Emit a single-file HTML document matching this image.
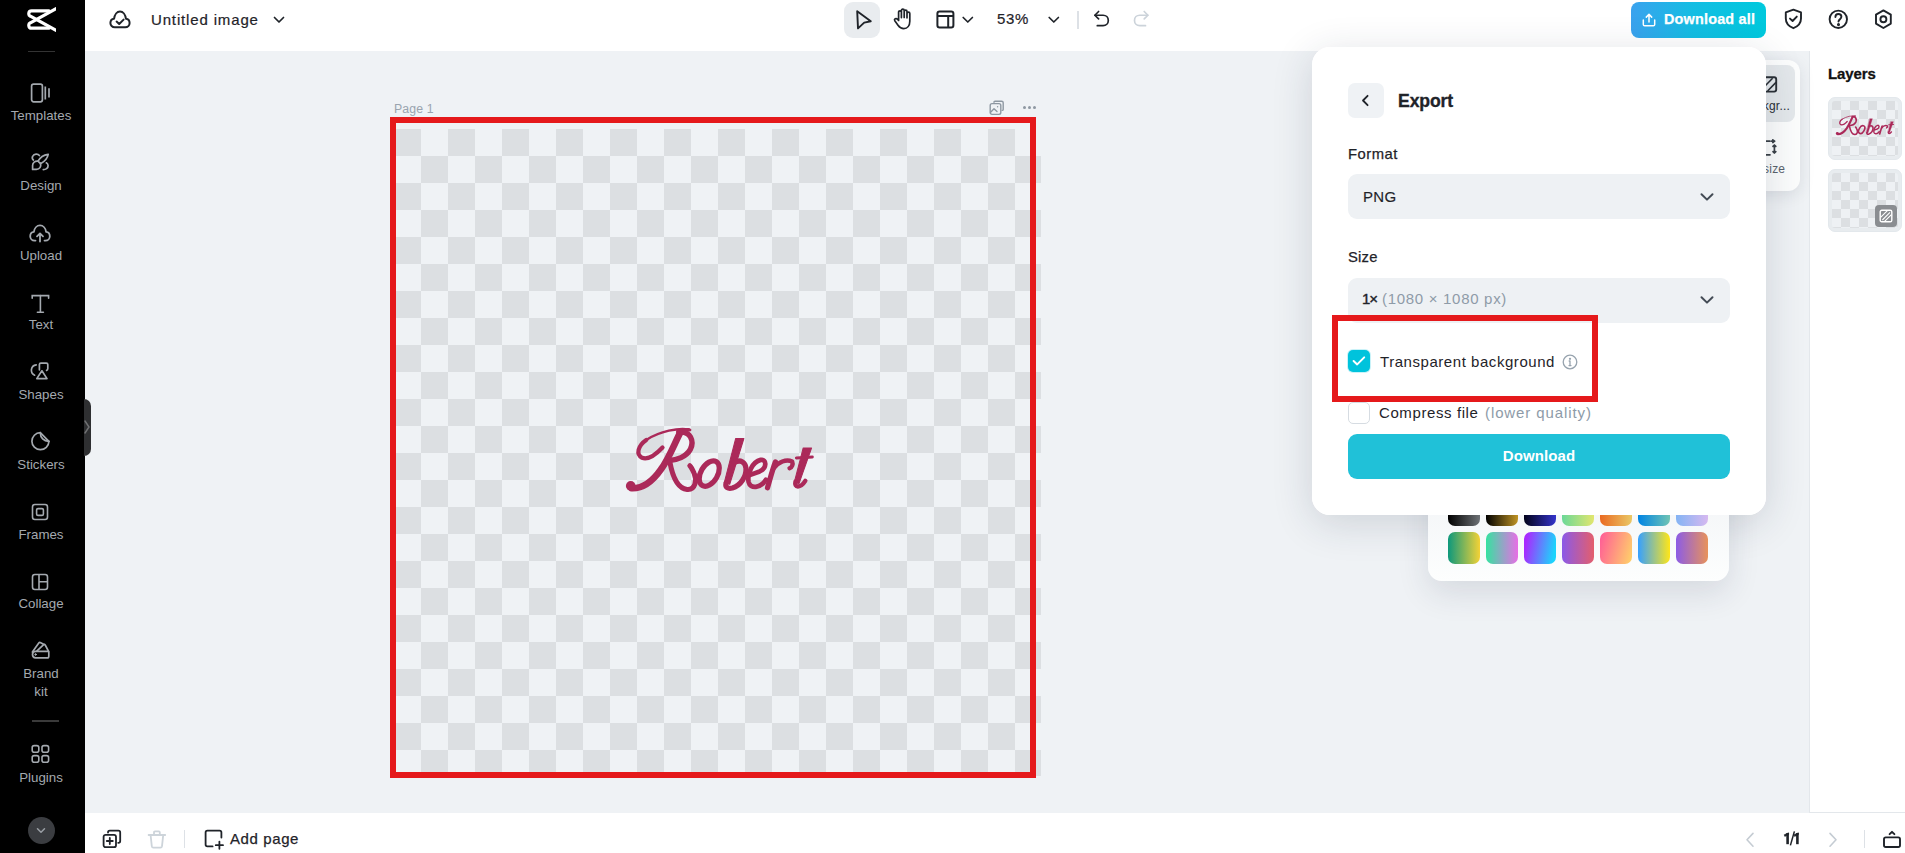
<!DOCTYPE html>
<html><head><meta charset="utf-8">
<style>
*{box-sizing:border-box;margin:0;padding:0}
html,body{width:1905px;height:853px;overflow:hidden;background:#eff2f5;font-family:"Liberation Sans",sans-serif;color:#1f2329}
.abs{position:absolute}
svg{display:block;position:absolute;overflow:visible}
#side{left:0;top:0;width:85px;height:853px;background:#000}
#header{left:85px;top:0;width:1820px;height:51px;background:#fff}
#bottom{left:85px;top:813px;width:1820px;height:40px;background:#fff}
#layers{left:1809px;top:51px;width:96px;height:762px;background:#fff;border-left:1px solid #e3e7eb;border-bottom:1px solid #e3e7eb}
.sl{position:absolute;left:0;width:82px;text-align:center;font-size:13.3px;color:#a4a9af;line-height:13px;white-space:nowrap}
.t{position:absolute;white-space:nowrap;line-height:1}
</style></head><body>
<!-- SIDEBAR -->
<div id="side" class="abs">
  <svg style="left:26px;top:7px;overflow:hidden" width="30" height="25" viewBox="-1 -1 30 25" fill="none" stroke="#fff" stroke-width="3.2" stroke-linejoin="round" stroke-linecap="round">
    <path d="M22 2.8H4.6Q1.8 2.8 1.8 5.6V6.2Q1.8 7.4 3.4 8.2L29.5 22.6"/>
    <path d="M22 20.2H4.6Q1.8 20.2 1.8 17.4V16.8Q1.8 15.6 3.4 14.8L29.5 0.4"/>
  </svg>
  <div class="abs" style="left:28px;top:51px;width:27px;height:1px;background:#333"></div>
  <!-- Templates -->
  <svg style="left:30px;top:83px" width="22" height="20" viewBox="0 0 22 20" fill="none" stroke="#a4a9af" stroke-width="1.7">
    <rect x="1.6" y="1.2" width="10.8" height="17.6" rx="2"/>
    <path d="M15.3 3.4V16.4M19 5.2V14.6"/>
  </svg>
  <div class="sl" style="top:109px">Templates</div>
  <!-- Design -->
  <svg style="left:31px;top:153px" width="19" height="19" viewBox="0 0 19 19" fill="none" stroke="#a4a9af" stroke-width="1.7" stroke-linecap="round" stroke-linejoin="round">
    <path d="M17.2 1.3C12 2 8.6 5.2 7 8.2L9.5 10.7C12.5 9.1 16.4 5.6 17.2 1.3Z"/>
    <path d="M7 8.2C4 7.8 1.6 9.6 1.6 12.6V16.4H5.4C8.6 16.4 10.4 13.6 9.5 10.7"/>
    <path d="M8.4 2.6C7 0.7 3.2 0.5 1.6 3.4C1 4.8 1.5 6.3 2.4 7"/>
    <path d="M15.3 9.8C17.5 11 17.8 14 15.6 15.6C14.6 16.3 13.4 16.6 12.3 16.6"/>
  </svg>
  <div class="sl" style="top:179px">Design</div>
  <!-- Upload -->
  <svg style="left:29.4px;top:223.6px" width="22" height="19" viewBox="0 0 22 19" fill="none" stroke="#a4a9af" stroke-width="1.8" stroke-linecap="round" stroke-linejoin="round">
    <path d="M6.5 16.6H5.6C3.1 16.6 1.2 14.6 1.2 12.2C1.2 10 2.8 8.2 4.9 7.9C5.3 4.2 7.9 1.4 11 1.4S16.7 4.2 17.1 7.9C19.2 8.2 20.8 10 20.8 12.2C20.8 14.6 18.9 16.6 16.4 16.6H15.5"/>
    <path d="M11 17.6V9.6M8 12.4L11 9.4L14 12.4"/>
  </svg>
  <div class="sl" style="top:249px">Upload</div>
  <!-- Text -->
  <svg style="left:30px;top:294px" width="21" height="20" viewBox="0 0 21 20" fill="none" stroke="#a4a9af" stroke-width="1.6" stroke-linecap="round">
    <path d="M2.2 4.2V1.6H18.6V4.2"/>
    <path d="M10.4 1.6V18.2M7.4 18.2H13.4"/>
  </svg>
  <div class="sl" style="top:318px">Text</div>
  <!-- Shapes -->
  <svg style="left:30px;top:361px" width="20" height="20" viewBox="0 0 20 20" fill="none" stroke="#a4a9af" stroke-width="1.7" stroke-linecap="round" stroke-linejoin="round">
    <path d="M6.2 3.9A5.4 5.4 0 0 0 4.6 14.2"/>
    <path d="M9.4 8.8V3.6Q9.4 2.1 10.9 2.1H16.3Q17.8 2.1 17.8 3.6V7.6Q17.8 9 16.6 9.4"/>
    <path d="M11.9 9.8L17 17.6H6.8Z"/>
  </svg>
  <div class="sl" style="top:388px">Shapes</div>
  <!-- Stickers -->
  <svg style="left:30px;top:431px" width="21" height="21" viewBox="0 0 21 21" fill="none" stroke="#a4a9af" stroke-width="1.7" stroke-linecap="round" stroke-linejoin="round">
    <path d="M10.3 1.7A8.5 8.5 0 1 0 18.9 10.4"/>
    <path d="M10.3 1.7L18.9 10.4"/>
    <path d="M10.3 2C10.4 6.6 13.8 10.4 18.7 10.3"/>
  </svg>
  <div class="sl" style="top:458px">Stickers</div>
  <!-- Frames -->
  <svg style="left:31px;top:503px" width="18" height="18" viewBox="0 0 18 18" fill="none" stroke="#a4a9af" stroke-width="1.6">
    <rect x="1.5" y="1.5" width="15" height="15" rx="2.4"/>
    <rect x="5.6" y="5.6" width="6.8" height="6.8" rx="1.4"/>
  </svg>
  <div class="sl" style="top:528px">Frames</div>
  <!-- Collage -->
  <svg style="left:31px;top:573px" width="18" height="18" viewBox="0 0 18 18" fill="none" stroke="#a4a9af" stroke-width="1.6">
    <rect x="1.5" y="1.5" width="15" height="15" rx="2.4"/>
    <path d="M8 1.5V16.5M8 8.8H16.5"/>
  </svg>
  <div class="sl" style="top:597px">Collage</div>
  <!-- Brand kit -->
  <svg style="left:30px;top:640px" width="21" height="20" viewBox="0 0 21 20" fill="none" stroke="#a4a9af" stroke-width="1.7" stroke-linecap="round" stroke-linejoin="round">
    <path d="M2.4 12L8.6 3.2Q9.5 2 10.7 2.7L14 4.6"/>
    <path d="M7 10.8L13.4 4.8Q14.4 4 15.2 5L18.2 10.6"/>
    <path d="M18.8 11.4V16.2Q18.8 17.9 17.1 17.9H5.6Q2.5 17.9 2.5 14.6Q2.5 11.3 5.6 11.3Z"/>
    <circle cx="5.6" cy="14.5" r="0.8" fill="#a4a9af" stroke-width="1"/>
  </svg>
  <div class="sl" style="top:667px">Brand</div>
  <div class="sl" style="top:685px">kit</div>
  <div class="abs" style="left:32px;top:720px;width:27px;height:1.5px;background:#3a3a3a"></div>
  <!-- Plugins -->
  <svg style="left:31px;top:744px" width="19" height="20" viewBox="0 0 19 20" fill="none" stroke="#a4a9af" stroke-width="1.6">
    <rect x="1.2" y="1.6" width="6.6" height="6.6" rx="2"/>
    <rect x="11" y="1.6" width="6.6" height="6.6" rx="2"/>
    <rect x="1.2" y="11.6" width="6.6" height="6.6" rx="2"/>
    <rect x="11" y="11.6" width="6.6" height="6.6" rx="2"/>
  </svg>
  <div class="sl" style="top:771px">Plugins</div>
  <div class="abs" style="left:27.5px;top:817px;width:27px;height:27px;border-radius:50%;background:#3b3d41"></div>
  <svg style="left:36px;top:827px" width="10" height="7" viewBox="0 0 10 7" fill="none" stroke="#9a9fa5" stroke-width="1.5" stroke-linecap="round" stroke-linejoin="round"><path d="M1.5 1.8L5 5.2L8.5 1.8"/></svg>
</div>
<div class="abs" style="left:84px;top:399px;width:7px;height:57px;background:#2e2f31;border-radius:0 7px 7px 0"></div>
<svg style="left:84px;top:419px" width="7" height="16" viewBox="0 0 7 16" fill="none" stroke="#6f7072" stroke-width="1.5" stroke-linecap="round"><path d="M1 2L5 8L1 14"/></svg>
<!-- HEADER -->
<div id="header" class="abs"></div>
<!-- header left -->
<svg style="left:109px;top:10px" width="22" height="19" viewBox="0 0 22 19" fill="none" stroke="#1f2329" stroke-width="2" stroke-linecap="round" stroke-linejoin="round">
  <path d="M5.8 17.2C3.2 17.2 1.4 15.3 1.4 12.9C1.4 10.7 3 9 5.1 8.7C5.6 4.6 8 1.4 11 1.4S16.4 4.6 16.9 8.7C19 9 20.6 10.7 20.6 12.9C20.6 15.3 18.8 17.2 16.2 17.2Z"/>
  <path d="M7.6 11.6L10.2 14L14.6 9.6"/>
</svg>
<div class="t" style="left:151px;top:12px;font-size:15px;letter-spacing:0.85px;font-weight:500;color:#1f2329;-webkit-text-stroke:0.2px #1f2329">Untitled image</div>
<svg style="left:273px;top:16px" width="12" height="8" viewBox="0 0 12 8" fill="none" stroke="#1f2329" stroke-width="1.7" stroke-linecap="round" stroke-linejoin="round"><path d="M1.5 1.5L6 6L10.5 1.5"/></svg>
<!-- center toolbar -->
<div class="abs" style="left:844px;top:2px;width:36px;height:36px;border-radius:9px;background:#e9ecef"></div>
<svg style="left:855px;top:9px" width="18" height="21" viewBox="0 0 18 21" fill="none" stroke="#1f2329" stroke-width="1.9" stroke-linejoin="round">
  <path d="M2.2 2.2L15.8 12.2L9.2 13.6L3 19.4Z"/>
</svg>
<svg style="left:893px;top:8px" width="19" height="22" viewBox="0 0 19 22" fill="none" stroke="#1f2329" stroke-width="1.7" stroke-linecap="round" stroke-linejoin="round">
  <path d="M5.6 12.4V4.2Q5.6 2.8 7 2.8Q8.4 2.8 8.4 4.2V9.6M8.4 9V2.6Q8.4 1.2 9.8 1.2Q11.2 1.2 11.2 2.6V9.4M11.2 9.4V3.6Q11.2 2.2 12.6 2.2Q14 2.2 14 3.6V9.8M14 9.8V5.6Q14 4.2 15.4 4.2Q16.8 4.2 16.8 5.6V13.2C16.8 17.6 14.4 20.6 10.8 20.6C8.2 20.6 6.6 19.4 5 17.2L1.8 12.8Q1 11.6 2.2 10.8Q3.4 10.2 4.4 11.2L5.6 12.4"/>
</svg>
<svg style="left:936px;top:10px" width="19" height="19" viewBox="0 0 19 19" fill="none" stroke="#1f2329" stroke-width="2">
  <rect x="1.4" y="1.4" width="16" height="16" rx="2.2"/>
  <path d="M1.4 6H17.4M12.2 6V17.4"/>
</svg>
<svg style="left:962px;top:16px" width="12" height="8" viewBox="0 0 12 8" fill="none" stroke="#1f2329" stroke-width="1.7" stroke-linecap="round" stroke-linejoin="round"><path d="M1.2 1.5L5.8 6L10.4 1.5"/></svg>
<div class="t" style="left:997px;top:10.5px;font-size:15px;font-weight:500;color:#1f2329;letter-spacing:0.7px;-webkit-text-stroke:0.2px #1f2329">53%</div>
<svg style="left:1048px;top:16px" width="12" height="8" viewBox="0 0 12 8" fill="none" stroke="#1f2329" stroke-width="1.7" stroke-linecap="round" stroke-linejoin="round"><path d="M1.2 1.5L5.8 6L10.4 1.5"/></svg>
<div class="abs" style="left:1077px;top:11px;width:1.6px;height:18px;background:#dde1e6"></div>
<svg style="left:1092.5px;top:10px" width="16.8" height="16.8" viewBox="0 0 18 18" fill="none" stroke="#1f2329" stroke-width="1.8" stroke-linecap="round" stroke-linejoin="round">
  <path d="M6 1.6L2 5.6L6 9.6"/>
  <path d="M2.2 5.6H10.8C14 5.6 16.4 8 16.4 11.2S14 16.8 10.8 16.8H4.6"/>
</svg>
<svg style="left:1132.5px;top:10px" width="16.8" height="16.8" viewBox="0 0 18 18" fill="none" stroke="#ccd3da" stroke-width="1.8" stroke-linecap="round" stroke-linejoin="round">
  <path d="M12 1.6L16 5.6L12 9.6"/>
  <path d="M15.8 5.6H7.2C4 5.6 1.6 8 1.6 11.2S4 16.8 7.2 16.8H13.4"/>
</svg>
<!-- header right -->
<div class="abs" style="left:1631px;top:2px;width:135px;height:36px;border-radius:8px;background:linear-gradient(90deg,#3aa2ee 0%,#14bde3 45%,#00c9dd 100%)"></div>
<svg style="left:1642px;top:12.5px" width="14" height="14" viewBox="0 0 15 15" fill="none" stroke="#fff" stroke-width="1.6" stroke-linecap="round" stroke-linejoin="round">
  <path d="M1.4 7.6V12.2Q1.4 13.6 2.8 13.6H12.2Q13.6 13.6 13.6 12.2V7.6"/>
  <path d="M7.5 9.6V1.6M4.6 4.4L7.5 1.4L10.4 4.4"/>
</svg>
<div class="t" style="left:1664px;top:12px;font-size:14.4px;font-weight:700;color:#fff;letter-spacing:0.2px;-webkit-text-stroke:0.25px #fff">Download all</div>
<svg style="left:1784px;top:8px" width="19" height="22" viewBox="0 0 19 22" fill="none" stroke="#1f2329" stroke-width="1.9" stroke-linecap="round" stroke-linejoin="round">
  <path d="M9.4 1.6L17 4.4V10.6C17 15 13.6 18.6 9.4 20.2C5.2 18.6 1.8 15 1.8 10.6V4.4Z"/>
  <path d="M6 10.6L8.6 13L12.8 8.6"/>
</svg>
<svg style="left:1828px;top:9px" width="21" height="21" viewBox="0 0 21 21" fill="none" stroke="#1f2329" stroke-width="1.9" stroke-linecap="round" stroke-linejoin="round">
  <circle cx="10.3" cy="10.3" r="8.7"/>
  <path d="M7.4 8C7.4 6.2 8.8 5 10.4 5S13.4 6.2 13.4 7.8C13.4 10 10.5 10.4 10.5 12.6"/>
  <circle cx="10.5" cy="15.6" r="0.6" fill="#1f2329"/>
</svg>
<svg style="left:1874px;top:9px" width="19" height="21" viewBox="0 0 19 21" fill="none" stroke="#1f2329" stroke-width="1.9" stroke-linejoin="round">
  <path d="M9.4 1.4L16.8 5.6V14.6L9.4 19L2 14.6V5.6Z"/>
  <circle cx="9.4" cy="10.2" r="3"/>
</svg>
<!-- BOTTOM -->
<div id="bottom" class="abs"></div>
<svg style="left:102px;top:829px" width="20" height="20" viewBox="0 0 20 20" fill="none" stroke="#1f2329" stroke-width="1.8" stroke-linecap="round" stroke-linejoin="round">
  <path d="M6 3.6V3.4Q6 1.6 7.8 1.6H16.4Q18.2 1.6 18.2 3.4V12Q18.2 13.8 16.4 13.8H16.2"/>
  <rect x="1.6" y="5.8" width="12.4" height="12.4" rx="2"/>
  <path d="M7.8 9V15M4.8 12H10.8"/>
</svg>
<svg style="left:147px;top:830px" width="20" height="19" viewBox="0 0 20 19" fill="none" stroke="#cdd4da" stroke-width="1.8" stroke-linecap="round" stroke-linejoin="round">
  <path d="M1.6 5H18.2M7 4.6V2.4Q7 1.4 8 1.4H11.8Q12.8 1.4 12.8 2.4V4.6"/>
  <path d="M3.6 5.2L4.8 16.2Q5 17.6 6.4 17.6H13.4Q14.8 17.6 15 16.2L16.2 5.2"/>
</svg>
<div class="abs" style="left:184px;top:830px;width:1.4px;height:18px;background:#dde1e6"></div>
<svg style="left:204px;top:829px" width="21" height="21" viewBox="0 0 21 21" fill="none" stroke="#1f2329" stroke-width="1.8" stroke-linecap="round" stroke-linejoin="round">
  <path d="M8.6 17.4H3.4Q1.6 17.4 1.6 15.6V3.4Q1.6 1.6 3.4 1.6H15.6Q17.4 1.6 17.4 3.4V8.6"/>
  <path d="M15.4 12.6V19.8M11.8 16.2H19"/>
</svg>
<div class="t" style="left:230px;top:831px;font-size:15px;font-weight:500;letter-spacing:0.6px;color:#1f2329;-webkit-text-stroke:0.25px #1f2329">Add page</div>
<svg style="left:1745px;top:832px" width="10" height="16" viewBox="0 0 10 16" fill="none" stroke="#c5ccd3" stroke-width="1.6" stroke-linecap="round" stroke-linejoin="round"><path d="M8 1.4L2 7.8L8 14.2"/></svg>
<svg style="left:1782px;top:830px" width="20" height="17" viewBox="0 0 20 17" fill="none" stroke="#1f2329" stroke-linejoin="round">
  <path d="M5.6 3V14.2" stroke-width="2.6"/>
  <path d="M2.2 4.8L6.6 2.8V4.6L2.8 6.4Z" fill="#1f2329" stroke-width="0.6"/>
  <path d="M8.4 15.4L12.4 1.4" stroke-width="1.5"/>
  <path d="M15.4 3V14.2" stroke-width="2.6"/>
  <path d="M12 4.8L16.4 2.8V4.6L12.6 6.4Z" fill="#1f2329" stroke-width="0.6"/>
</svg>
<svg style="left:1828px;top:832px" width="10" height="16" viewBox="0 0 10 16" fill="none" stroke="#c5ccd3" stroke-width="1.6" stroke-linecap="round" stroke-linejoin="round"><path d="M2 1.4L8 7.8L2 14.2"/></svg>
<div class="abs" style="left:1864px;top:830px;width:1.4px;height:18px;background:#dde1e6"></div>
<svg style="left:1882px;top:830px" width="20" height="19" viewBox="0 0 20 19" fill="none" stroke="#1f2329" stroke-width="1.9" stroke-linecap="round" stroke-linejoin="round">
  <rect x="2" y="7.4" width="16" height="9.6" rx="1.8"/>
  <path d="M7.6 4.2L10 1.8L12.4 4.2"/>
</svg>
<!-- LAYERS -->
<div id="layers" class="abs"></div>
<div class="t" style="left:1828px;top:66px;font-size:15px;font-weight:700;color:#111;letter-spacing:-0.1px;-webkit-text-stroke:0.3px #111">Layers</div>
<div class="abs" style="left:1828px;top:97px;width:74px;height:63px;border-radius:7px;background:#e8ecef;border:1px solid #e3e8ec"></div>
<div class="abs" style="left:1832px;top:101px;width:66px;height:55px;border-radius:3px;background:conic-gradient(transparent 25%,#dcdfe2 0 50%,transparent 0 75%,#dcdfe2 0) 0 0/18px 18px #eef1f4"></div>
<div class="abs" style="left:1828px;top:169px;width:74px;height:63px;border-radius:7px;background:#e8ecef;border:1px solid #e3e8ec"></div>
<div class="abs" style="left:1832px;top:173px;width:66px;height:55px;border-radius:3px;background:conic-gradient(transparent 25%,#dcdfe2 0 50%,transparent 0 75%,#dcdfe2 0) 0 0/18px 18px #eef1f4"></div>
<div class="abs" style="left:1875px;top:205px;width:22px;height:22px;border-radius:4px;background:#8a8d91"></div>
<svg style="left:1879px;top:209px" width="14" height="14" viewBox="0 0 14 14" fill="none" stroke="#fff" stroke-width="1.4">
  <rect x="1.2" y="1.2" width="11.6" height="11.6" rx="1.6"/>
  <path d="M1.6 8.4L8.4 1.6M5.6 12.4L12.4 5.6M3.4 11L11 3.4" stroke-width="1.1"/>
</svg>

<div class="t" style="left:394px;top:103px;font-size:12.3px;color:#9aa4af;letter-spacing:0.1px">Page 1</div>
<svg style="left:989px;top:100px" width="16" height="16" viewBox="0 0 16 16" fill="none" stroke="#8e98a2" stroke-width="1.4" stroke-linecap="round" stroke-linejoin="round">
  <path d="M5 2.2Q5 1.2 6 1.2H12.6Q14.2 1.2 14.2 2.8V9.4Q14.2 10.4 13.2 10.4"/>
  <rect x="1.2" y="3.6" width="10.6" height="10.8" rx="1.8"/>
  <path d="M1.6 12.2L5 8.8L8 11.6M8.6 6.6V6.8"/>
</svg>
<div class="abs" style="left:1023px;top:106px;width:3px;height:3px;border-radius:50%;background:#8e98a2"></div>
<div class="abs" style="left:1028px;top:106px;width:3px;height:3px;border-radius:50%;background:#8e98a2"></div>
<div class="abs" style="left:1033px;top:106px;width:3px;height:3px;border-radius:50%;background:#8e98a2"></div>
<!-- canvas -->
<div class="abs" style="left:394.3px;top:129px;width:646.5px;height:647px;background:conic-gradient(transparent 25%,#dcdfe2 0 50%,transparent 0 75%,#dcdfe2 0) 0 0/54px 54px #eff2f5"></div>
<svg id="robert" style="left:620px;top:420px" width="200" height="80" viewBox="0 0 1905 762"><g id="rob" fill="none" stroke="#ab2959" stroke-linecap="round" stroke-linejoin="round">
  <path d="M655 90C560 72 380 105 250 190" stroke-width="24"/><path d="M250 190C170 245 150 330 210 360C270 385 350 320 405 262" stroke-width="40"/>
  <path d="M600 112C620 92 650 85 665 95" stroke-width="30"/>
  <path d="M575 118C530 200 460 380 390 470C320 570 230 655 110 650" stroke-width="64"/>
  <circle cx="102" cy="628" r="46" fill="#ab2959" stroke="none"/>
  <path d="M560 115C670 100 710 200 670 280C630 350 540 385 470 385" stroke-width="52"/>
  <path d="M475 400C495 510 535 650 640 662C720 668 735 570 705 505C690 470 680 450 665 435" stroke-width="48"/>
  <ellipse cx="850" cy="510" rx="80" ry="132" transform="rotate(30 850 510)" stroke-width="50"/>
  <path d="M1102 176L1180 176L1045 612L993 598Z" fill="#ab2959" stroke-width="10"/>
  <path d="M1010 600C1000 645 1030 658 1070 648C1150 625 1205 535 1200 460C1195 400 1145 372 1090 405" stroke-width="50"/>
  <path d="M1390 570C1340 650 1240 660 1225 590C1210 510 1260 400 1340 380C1400 370 1400 460 1330 490L1235 525" stroke-width="45"/>
  <path d="M1405 645C1430 560 1450 480 1480 400" stroke-width="50"/>
  <path d="M1465 460C1510 400 1580 370 1640 395C1650 420 1640 450 1615 460" stroke-width="42"/>
  <path d="M1745 266L1825 266L1705 605L1660 595Z" fill="#ab2959" stroke-width="10"/>
  <path d="M1672 585C1655 650 1720 650 1765 580" stroke-width="42"/>
  <path d="M1680 362L1832 352" stroke-width="28"/>
</g></svg>
<div class="abs" style="left:390px;top:117px;width:646px;height:661px;border:6px solid #e5191b"></div>


<!-- floating toolbar behind -->
<div class="abs" style="left:1700px;top:60px;width:100px;height:131px;border-radius:12px;background:#fcfdfd;box-shadow:0 4px 16px rgba(30,40,60,0.10)"></div>
<div class="abs" style="left:1705px;top:65px;width:90px;height:57px;border-radius:8px;background:#e4e8eb"></div>
<svg style="left:1762px;top:76px" width="16" height="17" viewBox="0 0 16 17" fill="none" stroke="#2a2f35" stroke-width="1.9">
  <rect x="1.2" y="1.2" width="13" height="14.4" rx="2"/>
  <path d="M2 11L10.6 2.2M5.6 15L14 6.4" stroke-width="1.6"/>
</svg>
<div class="t" style="left:1690px;top:100px;width:100px;text-align:right;font-size:12px;color:#2a2f35;letter-spacing:0.2px">Backgr...</div>
<svg style="left:1760px;top:139px" width="18" height="18" viewBox="0 0 18 18" fill="none" stroke="#3a4047" stroke-width="1.7" stroke-linecap="round" stroke-linejoin="round">
  <path d="M10 2.2H4Q2.4 2.2 2.4 3.8V14.2Q2.4 15.8 4 15.8H10"/>
  <path d="M11.6 2.2H14.6M12.8 0.8L14.6 2.2L12.8 3.6"/>
  <path d="M14.4 6V14M13 7.4L14.4 6L15.8 7.4M13 12.6L14.4 14L15.8 12.6"/>
</svg>
<div class="t" style="left:1752px;top:163px;font-size:12px;color:#5a636c;letter-spacing:0.2px">resize</div>

<div class="abs" style="left:1312px;top:47px;width:454px;height:468px;border-radius:18px;background:#fff;box-shadow:0 8px 40px rgba(30,45,70,0.16)"></div>
<!-- palette panel behind -->
<div class="abs" style="left:1428px;top:420px;width:301px;height:161px;border-radius:14px;background:linear-gradient(180deg,#eaeef1 0%,#f3f5f7 45%,#fdfefe 100%);box-shadow:0 12px 32px rgba(30,45,70,0.12)"></div>
<div class="abs" style="left:1448px;top:494px;width:32px;height:32px;border-radius:7px;background:linear-gradient(90deg,#000,#6e7276)"></div>
<div class="abs" style="left:1486px;top:494px;width:32px;height:32px;border-radius:7px;background:linear-gradient(90deg,#000 0%,#c09424)"></div>
<div class="abs" style="left:1524px;top:494px;width:32px;height:32px;border-radius:7px;background:linear-gradient(90deg,#02021a,#3434cc)"></div>
<div class="abs" style="left:1562px;top:494px;width:32px;height:32px;border-radius:7px;background:linear-gradient(90deg,#6ad898,#e2e66e)"></div>
<div class="abs" style="left:1600px;top:494px;width:32px;height:32px;border-radius:7px;background:linear-gradient(90deg,#ea6a22,#eac866)"></div>
<div class="abs" style="left:1638px;top:494px;width:32px;height:32px;border-radius:7px;background:linear-gradient(90deg,#0084e4,#70c4b4)"></div>
<div class="abs" style="left:1676px;top:494px;width:32px;height:32px;border-radius:7px;background:linear-gradient(90deg,#84b4f4,#d6b8f0)"></div>
<div class="abs" style="left:1448px;top:532px;width:32px;height:32px;border-radius:7px;background:linear-gradient(90deg,#0d987c,#f4d236)"></div>
<div class="abs" style="left:1486px;top:532px;width:32px;height:32px;border-radius:7px;background:linear-gradient(90deg,#36e2a0,#e86ee6)"></div>
<div class="abs" style="left:1524px;top:532px;width:32px;height:32px;border-radius:7px;background:linear-gradient(100deg,#a82aff 10%,#1cd4fc 90%)"></div>
<div class="abs" style="left:1562px;top:532px;width:32px;height:32px;border-radius:7px;background:linear-gradient(90deg,#8a5ae8,#e45e6c)"></div>
<div class="abs" style="left:1600px;top:532px;width:32px;height:32px;border-radius:7px;background:linear-gradient(105deg,#ff5a98,#ffd468)"></div>
<div class="abs" style="left:1638px;top:532px;width:32px;height:32px;border-radius:7px;background:linear-gradient(90deg,#36a0ff,#ffe618)"></div>
<div class="abs" style="left:1676px;top:532px;width:32px;height:32px;border-radius:7px;background:linear-gradient(90deg,#8c5ce6,#e8925a)"></div>

<!-- EXPORT PANEL -->
<div class="abs" style="left:1312px;top:47px;width:454px;height:468px;border-radius:18px;background:#fff"></div>
<div class="abs" style="left:1348px;top:83px;width:36px;height:35px;border-radius:7px;background:#eff2f5"></div>
<svg style="left:1360px;top:94px" width="11" height="13" viewBox="0 0 11 13" fill="none" stroke="#1f2329" stroke-width="1.8" stroke-linecap="round" stroke-linejoin="round"><path d="M7.6 1.8L3 6.5L7.6 11.2"/></svg>
<div class="t" style="left:1398px;top:92.5px;font-size:17.6px;font-weight:700;color:#1f2329;letter-spacing:-0.1px;-webkit-text-stroke:0.35px #1f2329">Export</div>
<div class="t" style="left:1348px;top:146.5px;font-size:14.8px;font-weight:500;color:#1f2329;letter-spacing:0.5px;-webkit-text-stroke:0.25px #1f2329">Format</div>
<div class="abs" style="left:1348px;top:174px;width:382px;height:45px;border-radius:9px;background:#eef1f4"></div>
<div class="t" style="left:1363px;top:188.5px;font-size:15px;color:#1f2329;letter-spacing:0.3px;-webkit-text-stroke:0.15px #1f2329">PNG</div>
<svg style="left:1699px;top:191.5px" width="16" height="10" viewBox="0 0 16 10" fill="none" stroke="#434b55" stroke-width="2" stroke-linecap="round" stroke-linejoin="round"><path d="M2.5 2.2L8 7.6L13.5 2.2"/></svg>
<div class="t" style="left:1348px;top:249.5px;font-size:14.8px;font-weight:500;color:#1f2329;letter-spacing:0.2px;-webkit-text-stroke:0.25px #1f2329">Size</div>
<div class="abs" style="left:1348px;top:278px;width:382px;height:45px;border-radius:9px;background:#eef1f4"></div>
<div class="t" style="left:1362px;top:291px;font-size:15px;color:#1f2329;letter-spacing:-1.2px;-webkit-text-stroke:0.4px #1f2329">1×</div>
<div class="t" style="left:1382px;top:291px;font-size:15px;color:#8e9ba8;letter-spacing:0.7px">(1080 × 1080 px)</div>
<svg style="left:1699px;top:295px" width="16" height="10" viewBox="0 0 16 10" fill="none" stroke="#434b55" stroke-width="2" stroke-linecap="round" stroke-linejoin="round"><path d="M2.5 2.2L8 7.6L13.5 2.2"/></svg>
<!-- checkboxes -->
<div class="abs" style="left:1348px;top:350px;width:22px;height:22px;border-radius:5px;background:#00c3dc;box-shadow:0 0 0 1px #c9f2f8"></div>
<svg style="left:1351px;top:354px" width="16" height="14" viewBox="0 0 16 14" fill="none" stroke="#fff" stroke-width="2" stroke-linecap="round" stroke-linejoin="round"><path d="M2.6 7L6.2 10.4L13.2 3.4"/></svg>
<div class="t" style="left:1380px;top:354px;font-size:15px;color:#1f2329;letter-spacing:0.55px">Transparent background</div>
<svg style="left:1562px;top:354px" width="16" height="16" viewBox="0 0 16 16" fill="none" stroke="#97a3ae" stroke-width="1.3" stroke-linecap="round">
  <circle cx="8" cy="8" r="6.8"/>
  <path d="M8 7V11.6M7 11.6H9M7.2 7H8"/>
  <circle cx="8" cy="4.8" r="0.5" fill="#97a3ae"/>
</svg>
<div class="abs" style="left:1348px;top:402px;width:22px;height:22px;border-radius:5px;background:#fff;border:1px solid #d6dce2"></div>
<div class="t" style="left:1379px;top:405px;font-size:15px;color:#1f2329;letter-spacing:0.6px">Compress file</div>
<div class="t" style="left:1485px;top:405px;font-size:15px;color:#8e9ba8;letter-spacing:0.9px">(lower quality)</div>
<div class="abs" style="left:1348px;top:434px;width:382px;height:45px;border-radius:9px;background:#20c1d8"></div>
<div class="t" style="left:1348px;top:447.5px;width:382px;text-align:center;font-size:15px;font-weight:700;color:#fff;letter-spacing:0.1px">Download</div>
<!-- red annotation -->
<div class="abs" style="left:1332px;top:315px;width:266px;height:87px;border:6px solid #e5191b"></div>
<svg style="left:1834px;top:113.3px" width="62" height="24.8" viewBox="0 0 1905 762"><use href="#rob"/></svg>
</body></html>
